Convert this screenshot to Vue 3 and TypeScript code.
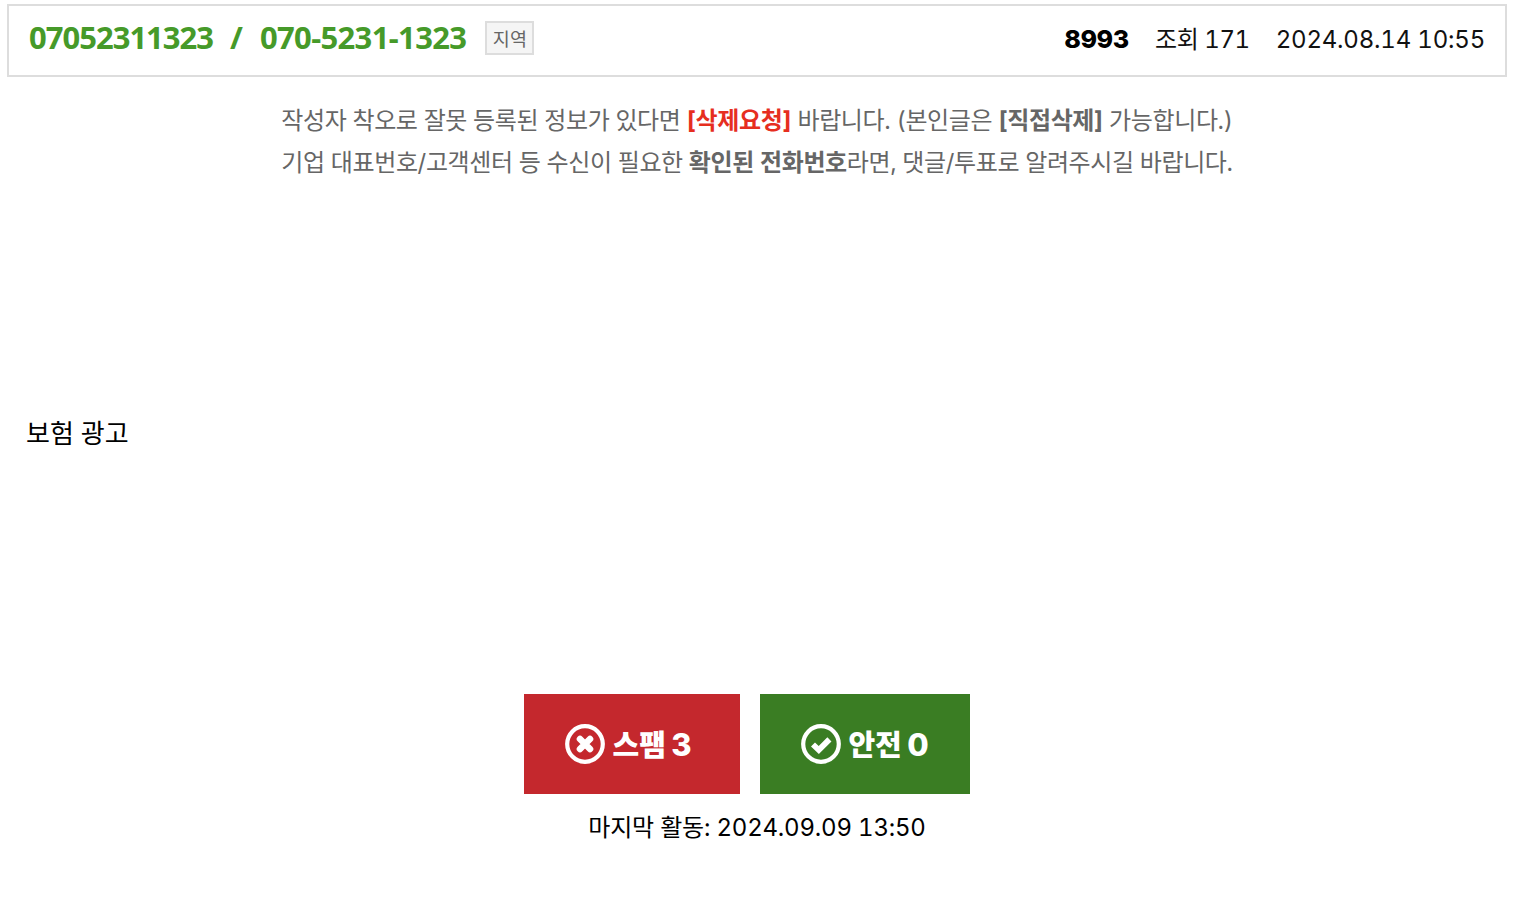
<script setup lang="ts">
const notice = '작성자 착오로 잘못 등록된 정보가 있다면 '
</script>

<template>
  <div class="page">
    <header class="head">
      <div class="title">
        <span class="num first">07052311323</span>
        <span class="slash">/</span>
        <span class="num">070-5231-1323</span>
        <span class="tag">지역</span>
      </div>
      <div class="meta">
        <b class="id">8993</b>
        <span class="views">조회 171</span>
        <span class="date">2024.08.14 10:55</span>
      </div>
    </header>

    <div class="notice">
      <p>{{ notice }}<b class="red">[삭제요청]</b> 바랍니다. (본인글은 <b>[직접삭제]</b> 가능합니다.)</p>
      <p>기업 대표번호/고객센터 등 수신이 필요한 <b>확인된 전화번호</b>라면, 댓글/투표로 알려주시길 바랍니다.</p>
    </div>

    <div class="ad">보험 광고</div>

    <div class="votes">
      <button class="btn spam" type="button">
        <svg viewBox="0 0 40 40" width="40" height="40" aria-hidden="true">
          <circle cx="20" cy="20" r="17.8" fill="none" stroke="#fff" stroke-width="4.2" />
          <path d="M15 15 L25 25 M25 15 L15 25" stroke="#fff" stroke-width="6.6" stroke-linecap="round" fill="none" />
        </svg>
        <span class="label">스팸 <span class="count">3</span></span>
      </button>
      <button class="btn safe" type="button">
        <svg viewBox="0 0 40 40" width="40" height="40" aria-hidden="true">
          <circle cx="20" cy="20" r="17.8" fill="none" stroke="#fff" stroke-width="4.2" />
          <path d="M12 20.5 L17.8 26 L28.4 15.4" stroke="#fff" stroke-width="5.8" fill="none" />
        </svg>
        <span class="label">안전 <span class="count">0</span></span>
      </button>
    </div>

    <div class="last">마지막 활동: 2024.09.09 13:50</div>
  </div>
</template>

<style scoped>
.page {
  width: 1500px;
  margin-left: 7px;
  padding-top: 4px;
  font-family: Inter, "Noto Sans CJK KR", sans-serif;
  font-variant-numeric: tabular-nums;
  color: #000;
}
.head {
  height: 73px;
  box-sizing: border-box;
  border: 2px solid #ddd;
  display: flex;
  justify-content: space-between;
  align-items: center;
  padding: 0 20px;
}
.title {
  display: flex;
  align-items: center;
  padding-bottom: 8px;
}
.num {
  font-family: "Noto Sans", "Noto Sans CJK KR", sans-serif;
  font-size: 31px;
  font-weight: 700;
  color: #469a29;
  letter-spacing: -0.65px;
}
.first {
  letter-spacing: -1px;
}
.slash {
  font-family: "Noto Sans", sans-serif;
  font-size: 31px;
  font-weight: 700;
  color: #469a29;
  margin: 0 17px;
}
.tag {
  margin: 2px 0 0 19px;
  width: 49px;
  height: 34px;
  box-sizing: border-box;
  border: 2px solid #ddd;
  background: #f5f5f5;
  color: #666;
  font-size: 18.5px;
  display: flex;
  align-items: center;
  justify-content: center;
}
.meta {
  display: flex;
  align-items: baseline;
  font-size: 24px;
  color: #111;
  padding-bottom: 7px;
}
.id {
  font-size: 25px;
  font-weight: 800;
  color: #000;
}
.views {
  margin-left: 26px;
  letter-spacing: -0.45px;
}
.date {
  margin-left: 26px;
  letter-spacing: -0.2px;
}
.notice {
  margin-top: 23px;
  text-align: center;
  color: #666;
  font-size: 24px;
  line-height: 42px;
  letter-spacing: -0.38px;
}
.notice p {
  margin: 0;
}
.notice b {
  font-weight: 700;
}
.red {
  color: #e62e1f;
}
.ad {
  margin-top: 233px;
  padding-left: 19px;
  font-size: 26px;
  line-height: 34px;
}
.votes {
  margin-top: 243px;
  display: flex;
  justify-content: center;
}
.btn {
  height: 100px;
  border: 0;
  margin: 0 20px 0 0;
  padding: 0;
  display: flex;
  align-items: center;
  justify-content: center;
  gap: 7px;
  color: #fff;
  font-family: inherit;
  font-size: 29px;
  font-weight: 800;
}
.label {
  padding-bottom: 2px;
}
.count {
  font-size: 31px;
  margin-left: -1px;
}
.spam {
  width: 216px;
  padding-right: 7px;
  background: #c4282d;
}
.safe {
  width: 210px;
  background: #3a7d23;
}
.last {
  margin-top: 17px;
  text-align: center;
  font-size: 24px;
  line-height: 34px;
  letter-spacing: -0.2px;
}
</style>
